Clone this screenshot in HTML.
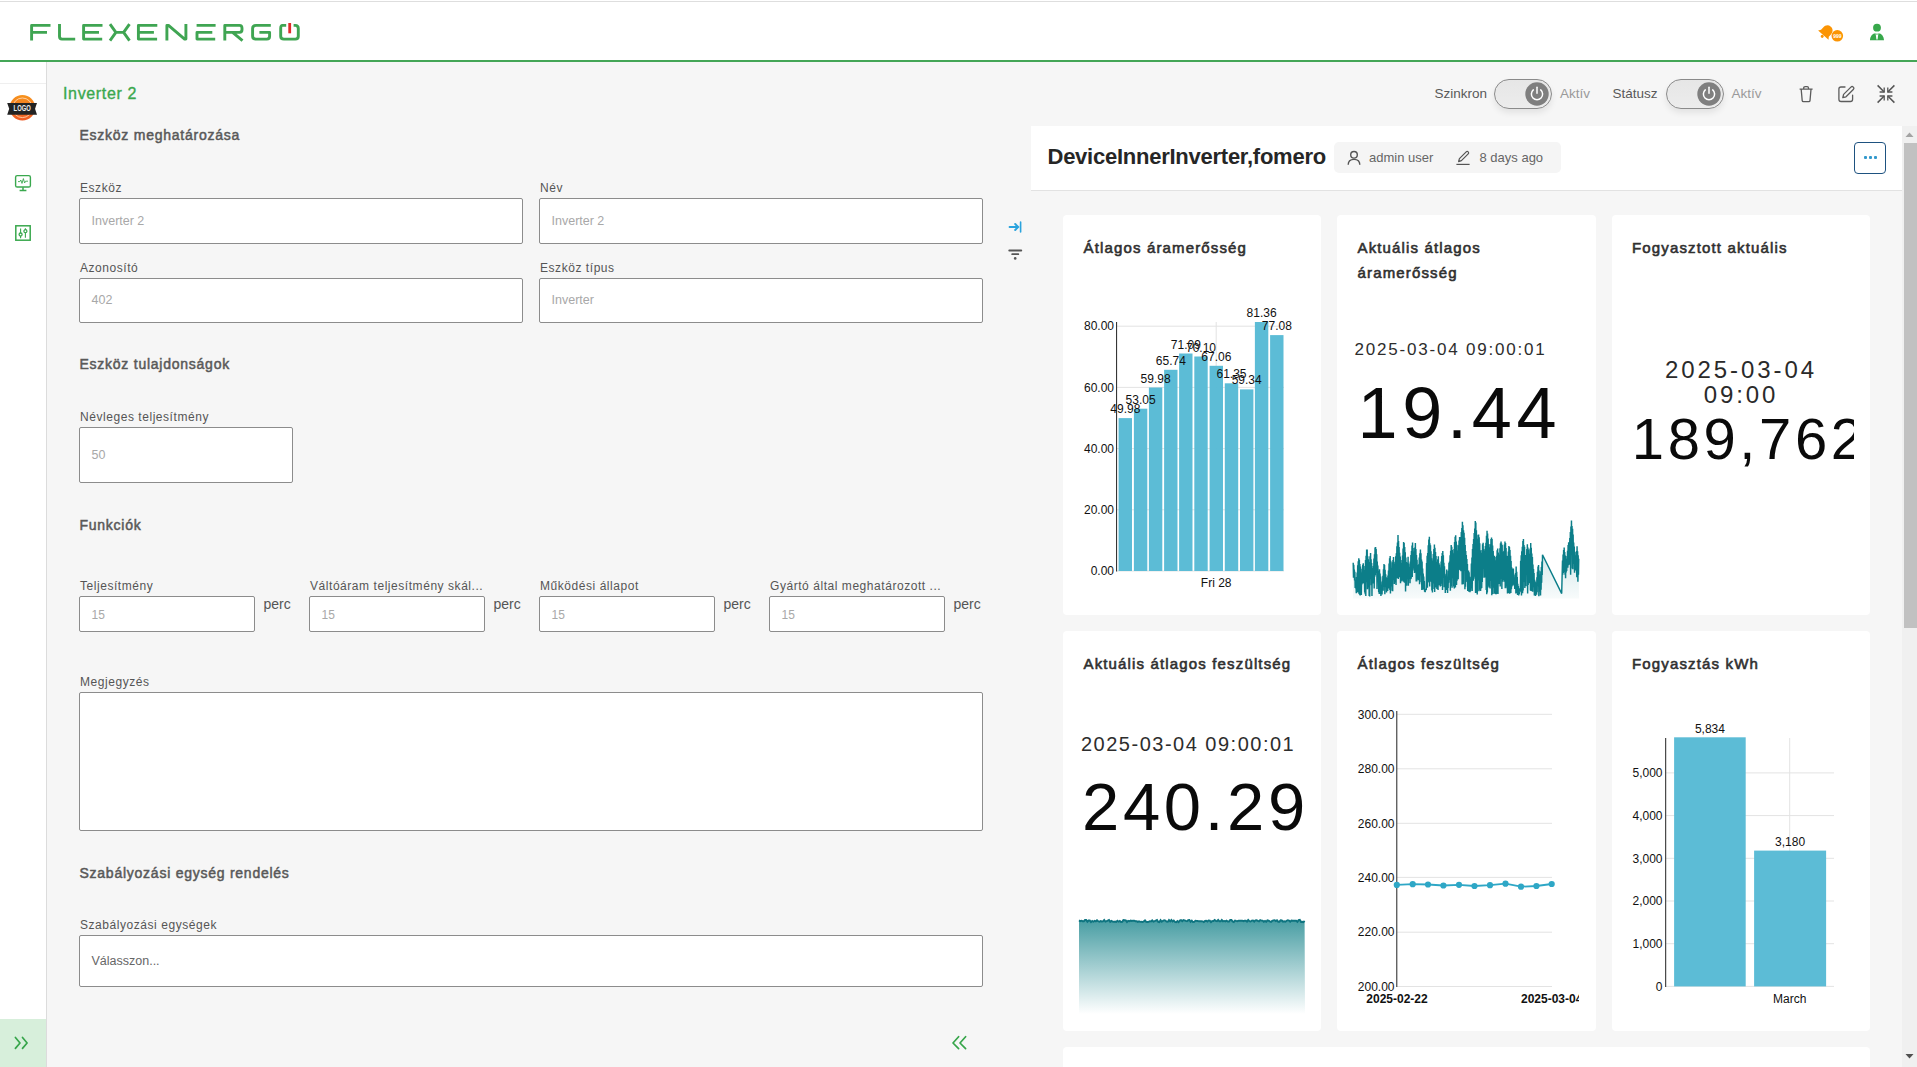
<!DOCTYPE html>
<html><head><meta charset="utf-8">
<style>
*{box-sizing:border-box;margin:0;padding:0}
html,body{width:1917px;height:1067px;overflow:hidden;background:#f6f6f6;font-family:"Liberation Sans",sans-serif;color:#333}
.abs{position:absolute}
.t{position:absolute;line-height:1;white-space:nowrap}
.tog{position:absolute;width:58px;height:30px;border:1px solid #8a8a8a;border-radius:15px;background:linear-gradient(#e6e6e6,#ececec);box-shadow:0 4px 6px rgba(0,0,0,0.08)}
#hdr{position:absolute;left:0;top:0;width:1917px;height:62px;background:#fff;border-top:2px solid #fff}
#hdr:before{content:"";position:absolute;left:0;top:-1px;width:100%;height:1px;background:#dedede}
#hdr:after{content:"";position:absolute;left:0;top:58px;width:100%;height:2px;background:#44a657}
#side{position:absolute;left:0;top:62px;width:47px;height:1005px;background:#fff;border-right:1px solid #dcdcdc}
.lbl{position:absolute;font-size:12px;color:#555;white-space:nowrap}
.inp{position:absolute;background:#fff;border:1.5px solid #8c8c8c;border-radius:2px}
.inp span{position:absolute;left:11px;font-size:12.5px;color:#a3a3a3;white-space:nowrap}
.sec{position:absolute;font-size:14.5px;font-weight:bold;color:#595959;white-space:nowrap}
.card{position:absolute;background:#fff;border-radius:4px;width:258px;height:400px}
.ctitle{position:absolute;left:20px;top:22px;font-size:15px;font-weight:bold;color:#2c2c2c;line-height:25px;white-space:nowrap}
.ax{font-family:"Liberation Sans",sans-serif;font-size:12px;fill:#111}
</style></head>
<body>
<!-- HEADER -->
<div id="hdr"></div>
<svg class="abs" style="left:0;top:0" width="320" height="60" viewBox="0 0 320 60">
<g fill="none" stroke="#3fa552" stroke-width="2.9" stroke-linejoin="round">
<!-- F -->
<path d="M50.5 25.4H31.6V40.6 M31.6 32.4H47"/>
<!-- L -->
<path d="M59.5 24V36.5Q59.5 39.1 62 39.1H75.2"/>
<!-- E -->
<path d="M102.5 25.4H83.6V39.1H102.2 M83.6 32.4H99"/>
<!-- X -->
<path d="M110 24.2L115.9 32.4L110 40.6 M115.9 32.4H123.6 M129.5 24.2L123.6 32.4L129.5 40.6"/>
<!-- E -->
<path d="M157.3 25.4H138.4V39.1H157.1 M138.4 32.4H153.9"/>
<!-- N -->
<path d="M166.9 40.6V25.4H168.5L184.6 39.1H185.9V24"/>
<!-- E -->
<path d="M215.6 25.4H196.6 M212.3 32.4H197V39.1H215.2"/>
<!-- R -->
<path d="M224.8 40.6V25.4H239.5Q242 25.4 242 28.3V29.8Q242 32.4 239.5 32.4H224.8 M232.6 32.4L242.5 40.6"/>
<!-- G -->
<path d="M270.8 25.4H256Q252.6 25.4 252.6 28.5V36.2Q252.6 39.1 256 39.1H266.8Q269.6 39.1 269.6 36.2V32.4H259.4"/>
<!-- O -->
<path d="M286.2 25.4H282.4Q280.7 25.4 280.7 28.5V36.2Q280.7 39.1 283.9 39.1H295.3Q298.3 39.1 298.3 36.2V28.5Q298.3 25.4 295.3 25.4H293.6"/>
</g>
<rect x="288.3" y="23" width="2.8" height="10.3" fill="#e02a2a"/>
</svg>
<!-- bell -->
<svg class="abs" style="left:1812px;top:20px" width="34" height="26" viewBox="0 0 34 26">
<g transform="translate(1.5 1.5) rotate(42 13 12) scale(0.9)" fill="#fb9403">
<path d="M13 4.5c-3.6 0-5.8 2.7-5.8 6.3v3.6l-2 2.6h15.6l-2-2.6v-3.6c0-3.6-2.2-6.3-5.8-6.3z"/>
<circle cx="13" cy="18.8" r="1.7"/>
</g>
<circle cx="25.3" cy="15.8" r="5.8" fill="#fb9403"/>
<text x="25.3" y="17.6" font-size="5" font-weight="bold" fill="#fff" text-anchor="middle" font-family="Liberation Sans">999</text>
</svg>
<!-- user -->
<svg class="abs" style="left:1866px;top:20px" width="22" height="24" viewBox="0 0 22 24">
<circle cx="11" cy="7.7" r="3.9" fill="#37a84b"/>
<path d="M4 20.2C4 16.5 6.6 13.2 9.6 13.2L10.4 19.5H11.6L12.4 13.2C15.4 13.2 18 16.5 18 20.2Z" fill="#37a84b"/>
<path d="M10.4 13.4h1.2l-0.2 1.6h-0.8z" fill="#37a84b"/>
</svg>

<!-- SIDEBAR -->
<div id="side"></div>
<div class="abs" style="left:0;top:83px;width:46px;height:1px;background:#efefef"></div>
<svg class="abs" style="left:6px;top:92px" width="32" height="32" viewBox="0 0 32 32">
<defs><linearGradient id="lg" x1="0" y1="0" x2="0" y2="1"><stop offset="0" stop-color="#f7941d"/><stop offset="1" stop-color="#ee5a24"/></linearGradient></defs>
<circle cx="16.4" cy="15.8" r="12.8" fill="url(#lg)"/>
<circle cx="16.4" cy="15.8" r="9.8" fill="none" stroke="#ffe0c0" stroke-width="0.8"/>
<path d="M1.2 10.9H31L29 16.8L31 22.7H1.2L3.2 16.8Z" fill="#232323"/>
<text x="7.6" y="19.2" font-size="8.2" font-weight="bold" fill="#f0f0f0" textLength="17.2" lengthAdjust="spacingAndGlyphs" font-family="Liberation Sans">LOGO</text>
</svg>
<svg class="abs" style="left:13px;top:173px" width="20" height="20" viewBox="0 0 20 20" fill="none" stroke="#3aa84e">
<rect x="2.6" y="2.6" width="14.8" height="11.4" rx="1.6" stroke-width="1.4"/>
<path d="M10 14.2V17.5M6.6 17.6H13.4" stroke-width="1.5"/>
<path d="M5 8.6H6.8L7.8 7L9 10.4L10.4 5.6L11.6 10L12.6 8.2H15" stroke-width="0.9"/>
</svg>
<svg class="abs" style="left:13px;top:223px" width="20" height="20" viewBox="0 0 20 20" fill="none" stroke="#3aa84e">
<rect x="2.8" y="2.8" width="14.4" height="14.4" stroke-width="1.5"/>
<path d="M7.6 5.5V15.2 M12.4 5.2V14.8" stroke-width="1.1"/>
<circle cx="7.6" cy="11.5" r="1.5" fill="#fff" stroke-width="1.3"/>
<circle cx="12.4" cy="8.2" r="1.5" fill="#fff" stroke-width="1.3"/>
</svg>
<div class="abs" style="left:0;top:1019px;width:46px;height:48px;background:#d7efdb"></div>
<svg class="abs" style="left:12px;top:1034px" width="20" height="18" viewBox="0 0 20 18" fill="none" stroke="#36a54a" stroke-width="1.7" stroke-linecap="round" stroke-linejoin="round">
<path d="M3.4 3.5L8 9L3.4 14.4 M10.5 3.5L15.1 9L10.5 14.4"/>
</svg>
<svg class="abs" style="left:948px;top:1033px" width="22" height="18" viewBox="0 0 22 18" fill="none" stroke="#36a54a" stroke-width="1.7" stroke-linecap="round" stroke-linejoin="round">
<path d="M10.6 3.7L5 10L10.6 15.6 M17.6 3.7L12 10L17.6 15.6"/>
</svg>
<div class="t" style="left:63px;top:85.5px;font-size:16px;color:#3aa84e;letter-spacing:0.65px;-webkit-text-stroke:0.35px #3aa84e">Inverter 2</div>


<div class="t" style="left:79.5px;top:128.15px;font-size:14px;color:#595959;letter-spacing:0.75px;-webkit-text-stroke:0.5px #595959;">Eszköz meghatározása</div>
<div class="t" style="left:80px;top:181.84px;font-size:12px;color:#555;letter-spacing:0.55px;">Eszköz</div>
<div class="t" style="left:540px;top:181.84px;font-size:12px;color:#555;letter-spacing:0.55px;">Név</div>
<div class="inp" style="left:79px;top:198px;width:444px;height:46px"></div>
<div class="inp" style="left:539px;top:198px;width:444px;height:46px"></div>
<div class="t" style="left:91.5px;top:215.42px;font-size:12.5px;color:#a8a8a8;">Inverter 2</div>
<div class="t" style="left:551.5px;top:215.42px;font-size:12.5px;color:#a8a8a8;">Inverter 2</div>
<div class="t" style="left:80px;top:261.84px;font-size:12px;color:#555;letter-spacing:0.55px;">Azonosító</div>
<div class="t" style="left:540px;top:261.84px;font-size:12px;color:#555;letter-spacing:0.55px;">Eszköz típus</div>
<div class="inp" style="left:79px;top:278px;width:444px;height:45px"></div>
<div class="inp" style="left:539px;top:278px;width:444px;height:45px"></div>
<div class="t" style="left:91.5px;top:294.42px;font-size:12.5px;color:#a8a8a8;">402</div>
<div class="t" style="left:551.5px;top:294.42px;font-size:12.5px;color:#a8a8a8;">Inverter</div>
<div class="t" style="left:79.5px;top:357.15px;font-size:14px;color:#595959;letter-spacing:0.75px;-webkit-text-stroke:0.5px #595959;">Eszköz tulajdonságok</div>
<div class="t" style="left:80px;top:410.84px;font-size:12px;color:#555;letter-spacing:0.55px;">Névleges teljesítmény</div>
<div class="inp" style="left:79px;top:427px;width:214px;height:56px"></div>
<div class="t" style="left:91.5px;top:449.42px;font-size:12.5px;color:#a8a8a8;">50</div>
<div class="t" style="left:79.5px;top:517.65px;font-size:14px;color:#595959;letter-spacing:0.75px;-webkit-text-stroke:0.5px #595959;">Funkciók</div>
<div class="t" style="left:80px;top:579.84px;font-size:12px;color:#555;letter-spacing:0.55px;">Teljesítmény</div>
<div class="inp" style="left:79px;top:596px;width:176px;height:36px"></div>
<div class="t" style="left:91.5px;top:608.84px;font-size:12px;color:#a8a8a8;">15</div>
<div class="t" style="left:263.5px;top:597.45px;font-size:14px;color:#555;">perc</div>
<div class="t" style="left:310px;top:579.84px;font-size:12px;color:#555;letter-spacing:0.55px;">Váltóáram teljesítmény skál...</div>
<div class="inp" style="left:309px;top:596px;width:176px;height:36px"></div>
<div class="t" style="left:321.5px;top:608.84px;font-size:12px;color:#a8a8a8;">15</div>
<div class="t" style="left:493.5px;top:597.45px;font-size:14px;color:#555;">perc</div>
<div class="t" style="left:540px;top:579.84px;font-size:12px;color:#555;letter-spacing:0.55px;">Működési állapot</div>
<div class="inp" style="left:539px;top:596px;width:176px;height:36px"></div>
<div class="t" style="left:551.5px;top:608.84px;font-size:12px;color:#a8a8a8;">15</div>
<div class="t" style="left:723.5px;top:597.45px;font-size:14px;color:#555;">perc</div>
<div class="t" style="left:770px;top:579.84px;font-size:12px;color:#555;letter-spacing:0.55px;">Gyártó által meghatározott ...</div>
<div class="inp" style="left:769px;top:596px;width:176px;height:36px"></div>
<div class="t" style="left:781.5px;top:608.84px;font-size:12px;color:#a8a8a8;">15</div>
<div class="t" style="left:953.5px;top:597.45px;font-size:14px;color:#555;">perc</div>
<div class="t" style="left:80px;top:675.84px;font-size:12px;color:#555;letter-spacing:0.55px;">Megjegyzés</div>
<div class="inp" style="left:79px;top:692px;width:904px;height:139px"></div>
<div class="t" style="left:79.5px;top:866.15px;font-size:14px;color:#595959;letter-spacing:0.75px;-webkit-text-stroke:0.5px #595959;">Szabályozási egység rendelés</div>
<div class="t" style="left:80px;top:919.34px;font-size:12px;color:#555;letter-spacing:0.55px;">Szabályozási egységek</div>
<div class="inp" style="left:79px;top:935px;width:904px;height:52px"></div>
<div class="t" style="left:91.5px;top:955.42px;font-size:12.5px;color:#666;">Válasszon...</div>
<svg class="abs" style="left:1006px;top:219px" width="18" height="16" viewBox="0 0 18 16" fill="none" stroke="#2aa3dd" stroke-linecap="round">
<path d="M3.6 8H12 M9.2 5L12.2 8L9.2 11" stroke-width="2"/><path d="M14.6 3V13" stroke-width="1.6"/></svg>
<svg class="abs" style="left:1006px;top:246px" width="18" height="18" viewBox="0 0 18 18" fill="#555">
<rect x="2.3" y="3.4" width="13.9" height="2" rx="1"/><rect x="5.3" y="7.3" width="7.9" height="1.8" rx="0.9"/><circle cx="9.2" cy="12.4" r="1.3"/></svg>
<div class="t" style="left:1434.5px;top:86.57px;font-size:13.5px;color:#595959;">Szinkron</div>
<div class="t" style="left:1560px;top:86.57px;font-size:13.5px;color:#9a9a9a;">Aktív</div>
<div class="t" style="left:1612.5px;top:86.57px;font-size:13.5px;color:#595959;">Státusz</div>
<div class="t" style="left:1731.5px;top:86.57px;font-size:13.5px;color:#9a9a9a;">Aktív</div>
<div class="tog" style="left:1494px;top:79px"></div>
<svg class="abs" style="left:1525px;top:82px" width="24" height="24" viewBox="0 0 24 24">
<circle cx="12" cy="12" r="11.7" fill="#7f7f7f"/>
<path d="M8.3 7.9A5.6 5.6 0 1 0 15.7 7.9" fill="none" stroke="#fff" stroke-width="1.5" stroke-linecap="round"/>
<path d="M12 5.2V11.2" stroke="#fff" stroke-width="1.5" stroke-linecap="round"/></svg>
<div class="tog" style="left:1666px;top:79px"></div>
<svg class="abs" style="left:1697px;top:82px" width="24" height="24" viewBox="0 0 24 24">
<circle cx="12" cy="12" r="11.7" fill="#7f7f7f"/>
<path d="M8.3 7.9A5.6 5.6 0 1 0 15.7 7.9" fill="none" stroke="#fff" stroke-width="1.5" stroke-linecap="round"/>
<path d="M12 5.2V11.2" stroke="#fff" stroke-width="1.5" stroke-linecap="round"/></svg>
<svg class="abs" style="left:1796px;top:84px" width="20" height="20" viewBox="0 0 20 20" fill="none" stroke="#5c5c5c" stroke-width="1.3" stroke-linejoin="round">
<path d="M3.6 5.2H16.6 M5.2 5.4L6.2 16.6Q6.3 17.6 7.4 17.6H12.8Q13.9 17.6 14 16.6L15 5.4 M7.7 5V3.9Q7.7 2.6 9.1 2.6H11.1Q12.5 2.6 12.5 3.9V5"/></svg>
<svg class="abs" style="left:1836px;top:84px" width="20" height="20" viewBox="0 0 20 20" fill="none" stroke="#5c5c5c" stroke-width="1.3" stroke-linecap="round" stroke-linejoin="round">
<path d="M9 3H5Q2.9 3 2.9 5.1V15.3Q2.9 17.5 5.1 17.5H14.4Q16.6 17.5 16.6 15.3V11.2"/>
<path d="M6.8 13.6L7.6 10.4L14.9 3.1Q16.1 1.9 17.3 3.1Q18.5 4.3 17.3 5.5L10 12.8Z"/></svg>
<svg class="abs" style="left:1876px;top:84px" width="20" height="20" viewBox="0 0 20 20" fill="none" stroke="#555" stroke-width="1.5">
<path d="M1.6 1.4L8.2 8 M18.4 1.4L11.8 8 M1.6 18.6L8.2 12 M18.4 18.6L11.8 12"/>
<path d="M8.2 3.6V8H3.6 M11.8 3.6V8H16.4 M8.2 16.4V12H3.6 M11.8 16.4V12H16.4" stroke-width="1.3"/></svg>
<!--RIGHT--><div class="abs" style="left:1031px;top:126px;width:871px;height:65px;background:#fff;border-bottom:1px solid #e2e2e2"></div>
<div class="t" style="left:1047.5px;top:146.38px;font-size:22px;font-weight:bold;color:#262626;letter-spacing:-0.25px;">DeviceInnerInverter,fomero</div>
<div class="abs" style="left:1334px;top:142px;width:227px;height:31px;background:#f5f5f5;border-radius:5px"></div>
<svg class="abs" style="left:1345px;top:149px" width="18" height="18" viewBox="0 0 18 18" fill="none" stroke="#555" stroke-width="1.4">
<circle cx="9" cy="5.8" r="3.3"/><path d="M3.2 15.8Q3.2 10.4 9 10.4Q14.8 10.4 14.8 15.8"/></svg>
<svg class="abs" style="left:1454px;top:149px" width="18" height="18" viewBox="0 0 18 18" fill="none" stroke="#555" stroke-width="1.2" stroke-linejoin="round">
<path d="M4.6 12.6L5.4 9.6L12.2 2.8Q13.2 1.8 14.2 2.8Q15.2 3.8 14.2 4.8L7.4 11.6Z"/><path d="M2.4 15.4H15.6"/></svg>
<div class="t" style="left:1369px;top:150.50px;font-size:13px;color:#666;">admin user</div>
<div class="t" style="left:1479.5px;top:150.50px;font-size:13px;color:#666;">8 days ago</div>
<div class="abs" style="left:1854px;top:142px;width:32px;height:32px;border:1.5px solid #1e5280;border-radius:4px"></div>
<div class="abs" style="left:1864.3px;top:156.3px;width:2.6px;height:2.6px;border-radius:1px;background:#3399cc"></div>
<div class="abs" style="left:1869.2px;top:156.3px;width:2.6px;height:2.6px;border-radius:1px;background:#3399cc"></div>
<div class="abs" style="left:1874.1px;top:156.3px;width:2.6px;height:2.6px;border-radius:1px;background:#3399cc"></div>
<div class="abs" style="left:1902px;top:126px;width:15px;height:941px;background:#f0f0f0"></div>
<div class="abs" style="left:1904px;top:143px;width:13px;height:485px;background:#c1c1c1"></div>
<svg class="abs" style="left:1902px;top:126px" width="15" height="17"><path d="M3.5 11H11.5L7.5 6.6Z" fill="#a3a3a3"/></svg>
<svg class="abs" style="left:1902px;top:1050px" width="15" height="17"><path d="M3.5 4H11.5L7.5 8.5Z" fill="#505050"/></svg>
<div class="card" style="left:1063px;top:215px;width:258px;height:400px"></div>
<div class="card" style="left:1337px;top:215px;width:259px;height:400px"></div>
<div class="card" style="left:1612px;top:215px;width:258px;height:400px"></div>
<div class="card" style="left:1063px;top:631px;width:258px;height:400px"></div>
<div class="card" style="left:1337px;top:631px;width:259px;height:400px"></div>
<div class="card" style="left:1612px;top:631px;width:258px;height:400px"></div>
<div class="card" style="left:1063px;top:1047px;width:807px;height:40px"></div>
<div class="t" style="left:1083.5px;top:240.30px;font-size:15px;color:#303030;font-size:15px;letter-spacing:1.15px;-webkit-text-stroke:0.6px #303030;">Átlagos áramerősség</div>
<div class="t" style="left:1357.5px;top:240.30px;font-size:15px;color:#303030;font-size:15px;letter-spacing:1.15px;-webkit-text-stroke:0.6px #303030;">Aktuális átlagos</div>
<div class="t" style="left:1357.5px;top:265.30px;font-size:15px;color:#303030;font-size:15px;letter-spacing:1.15px;-webkit-text-stroke:0.6px #303030;">áramerősség</div>
<div class="t" style="left:1632px;top:240.30px;font-size:15px;color:#303030;font-size:15px;letter-spacing:1.15px;-webkit-text-stroke:0.6px #303030;">Fogyasztott aktuális</div>
<div class="t" style="left:1083.5px;top:656.30px;font-size:15px;color:#303030;font-size:15px;letter-spacing:1.15px;-webkit-text-stroke:0.6px #303030;">Aktuális átlagos feszültség</div>
<div class="t" style="left:1357.5px;top:656.30px;font-size:15px;color:#303030;font-size:15px;letter-spacing:1.15px;-webkit-text-stroke:0.6px #303030;">Átlagos feszültség</div>
<div class="t" style="left:1632px;top:656.30px;font-size:15px;color:#303030;font-size:15px;letter-spacing:1.15px;-webkit-text-stroke:0.6px #303030;">Fogyasztás kWh</div>
<svg class="abs" style="left:0;top:0;overflow:visible" width="1" height="1"><line x1="1117" x2="1284" y1="571.0" y2="571.0" stroke="#e3e3e3" stroke-width="1"/><text class="ax" x="1114" y="575.2" text-anchor="end">0.00</text><line x1="1117" x2="1284" y1="509.8" y2="509.8" stroke="#e3e3e3" stroke-width="1"/><text class="ax" x="1114" y="514.0" text-anchor="end">20.00</text><line x1="1117" x2="1284" y1="448.6" y2="448.6" stroke="#e3e3e3" stroke-width="1"/><text class="ax" x="1114" y="452.8" text-anchor="end">40.00</text><line x1="1117" x2="1284" y1="387.4" y2="387.4" stroke="#e3e3e3" stroke-width="1"/><text class="ax" x="1114" y="391.6" text-anchor="end">60.00</text><line x1="1117" x2="1284" y1="326.2" y2="326.2" stroke="#e3e3e3" stroke-width="1"/><text class="ax" x="1114" y="330.4" text-anchor="end">80.00</text><line x1="1216.2" x2="1216.2" y1="322" y2="571" stroke="#e3e3e3"/><rect x="1118.6" y="418.1" width="13.4" height="152.9" fill="#57bad5" fill-opacity="0.97"/><rect x="1133.9" y="408.7" width="13.4" height="162.3" fill="#57bad5" fill-opacity="0.97"/><rect x="1148.9" y="387.5" width="13.4" height="183.5" fill="#57bad5" fill-opacity="0.97"/><rect x="1164.1" y="369.8" width="13.4" height="201.2" fill="#57bad5" fill-opacity="0.97"/><rect x="1179.1" y="353.5" width="13.4" height="217.5" fill="#57bad5" fill-opacity="0.97"/><rect x="1194.3" y="356.5" width="13.4" height="214.5" fill="#57bad5" fill-opacity="0.97"/><rect x="1209.6" y="365.8" width="13.4" height="205.2" fill="#57bad5" fill-opacity="0.97"/><rect x="1224.8" y="383.3" width="13.4" height="187.7" fill="#57bad5" fill-opacity="0.97"/><rect x="1240.0" y="389.4" width="13.4" height="181.6" fill="#57bad5" fill-opacity="0.97"/><rect x="1254.9" y="322.0" width="13.4" height="249.0" fill="#57bad5" fill-opacity="0.97"/><rect x="1270.1" y="335.1" width="13.4" height="235.9" fill="#57bad5" fill-opacity="0.97"/><text class="ax" x="1125.3" y="413.1" text-anchor="middle">49.98</text><text class="ax" x="1140.6" y="403.7" text-anchor="middle">53.05</text><text class="ax" x="1155.6" y="382.5" text-anchor="middle">59.98</text><text class="ax" x="1170.8" y="364.8" text-anchor="middle">65.74</text><text class="ax" x="1185.8" y="348.5" text-anchor="middle">71.09</text><text class="ax" x="1201.0" y="351.5" text-anchor="middle">70.10</text><text class="ax" x="1216.3" y="360.8" text-anchor="middle">67.06</text><text class="ax" x="1231.5" y="378.3" text-anchor="middle">61.35</text><text class="ax" x="1246.7" y="384.4" text-anchor="middle">59.34</text><text class="ax" x="1261.6" y="317.0" text-anchor="middle">81.36</text><text class="ax" x="1276.8" y="330.1" text-anchor="middle">77.08</text><line x1="1116.6" x2="1116.6" y1="322" y2="571.5" stroke="#222" stroke-width="1"/><text class="ax" x="1216.2" y="587" text-anchor="middle">Fri 28</text></svg>
<div class="t" style="left:1354.5px;top:340.61px;font-size:17px;color:#2d2d2d;letter-spacing:1.8px;">2025-03-04 09:00:01</div>
<div class="t" style="left:1357.5px;top:376.85px;font-size:72px;color:#0a0a0a;letter-spacing:4.7px;">19.44</div>
<svg class="abs" style="left:0;top:0;overflow:visible" width="1" height="1">
<defs><linearGradient id="g2" x1="0" y1="0" x2="0" y2="1"><stop offset="0" stop-color="#0e7f89" stop-opacity="0.28"/><stop offset="1" stop-color="#0e7f89" stop-opacity="0.03"/></linearGradient></defs>
<path d="M1353.20 562.7 L1353.48 577.8 L1353.76 564.8 L1354.04 577.3 L1354.32 569.6 L1354.60 580.5 L1354.88 571.8 L1355.16 588.1 L1355.44 580.5 L1355.72 588.4 L1356.00 583.9 L1356.28 593.2 L1356.56 577.1 L1356.84 592.0 L1357.12 572.4 L1357.40 586.9 L1357.68 565.2 L1357.96 592.4 L1358.24 561.3 L1358.52 577.2 L1358.80 558.2 L1359.08 594.0 L1359.36 559.7 L1359.64 594.8 L1359.92 564.0 L1360.20 595.4 L1360.48 566.6 L1360.76 584.0 L1361.04 572.5 L1361.32 594.9 L1361.60 576.5 L1361.88 584.4 L1362.16 568.7 L1362.44 580.4 L1362.72 564.7 L1363.00 583.5 L1363.28 563.3 L1363.56 580.7 L1363.84 570.3 L1364.12 582.9 L1364.40 573.2 L1364.68 592.4 L1364.96 566.0 L1365.24 594.2 L1365.52 560.1 L1365.80 595.9 L1366.08 555.7 L1366.36 582.3 L1366.64 549.5 L1366.92 578.5 L1367.20 549.4 L1367.48 589.3 L1367.76 556.3 L1368.04 586.2 L1368.32 559.3 L1368.60 587.5 L1368.88 565.9 L1369.16 596.0 L1369.44 562.1 L1369.72 596.6 L1370.00 556.2 L1370.28 575.5 L1370.56 552.9 L1370.84 579.0 L1371.12 559.3 L1371.40 585.3 L1371.68 563.0 L1371.96 596.1 L1372.24 568.7 L1372.52 582.7 L1372.80 568.1 L1373.08 583.5 L1373.36 566.0 L1373.64 577.6 L1373.92 558.6 L1374.20 588.6 L1374.48 554.3 L1374.76 576.7 L1375.04 547.6 L1375.32 575.3 L1375.60 547.1 L1375.88 572.9 L1376.16 549.1 L1376.44 573.1 L1376.72 554.3 L1377.00 589.1 L1377.28 561.5 L1377.56 578.9 L1377.84 565.4 L1378.12 581.3 L1378.40 571.3 L1378.68 592.2 L1378.96 575.2 L1379.24 594.0 L1379.52 569.2 L1379.80 594.1 L1380.08 573.5 L1380.36 583.7 L1380.64 576.4 L1380.92 595.9 L1381.20 584.7 L1381.48 592.6 L1381.76 585.7 L1382.04 594.5 L1382.32 581.4 L1382.60 587.4 L1382.88 575.8 L1383.16 590.7 L1383.44 569.2 L1383.72 581.4 L1384.00 564.0 L1384.28 587.0 L1384.56 565.1 L1384.84 594.3 L1385.12 569.7 L1385.40 582.3 L1385.68 574.3 L1385.96 587.0 L1386.24 577.3 L1386.52 592.5 L1386.80 582.5 L1387.08 588.5 L1387.36 577.7 L1387.64 591.0 L1387.92 575.5 L1388.20 583.7 L1388.48 570.4 L1388.76 588.5 L1389.04 563.4 L1389.32 581.6 L1389.60 558.3 L1389.88 589.9 L1390.16 555.9 L1390.44 593.6 L1390.72 560.8 L1391.00 577.8 L1391.28 568.2 L1391.56 586.5 L1391.84 568.8 L1392.12 590.8 L1392.40 562.2 L1392.68 591.2 L1392.96 559.9 L1393.24 576.5 L1393.52 557.1 L1393.80 580.2 L1394.08 563.8 L1394.36 584.1 L1394.64 568.4 L1394.92 582.6 L1395.20 561.7 L1395.48 581.7 L1395.76 556.3 L1396.04 585.1 L1396.32 553.2 L1396.60 578.2 L1396.88 546.3 L1397.16 568.7 L1397.44 542.6 L1397.72 578.0 L1398.00 535.0 L1398.28 579.1 L1398.56 541.0 L1398.84 576.9 L1399.12 546.9 L1399.40 574.9 L1399.68 552.7 L1399.96 577.6 L1400.24 556.6 L1400.52 583.2 L1400.80 563.2 L1401.08 581.5 L1401.36 563.0 L1401.64 579.5 L1401.92 560.0 L1402.20 580.8 L1402.48 555.4 L1402.76 571.8 L1403.04 548.5 L1403.32 581.7 L1403.60 542.1 L1403.88 570.4 L1404.16 543.0 L1404.44 582.7 L1404.72 547.0 L1405.00 577.3 L1405.28 552.2 L1405.56 591.6 L1405.84 557.5 L1406.12 582.3 L1406.40 562.1 L1406.68 585.7 L1406.96 566.9 L1407.24 579.2 L1407.52 562.9 L1407.80 577.1 L1408.08 556.8 L1408.36 585.7 L1408.64 563.5 L1408.92 578.7 L1409.20 567.7 L1409.48 578.5 L1409.76 567.3 L1410.04 583.3 L1410.32 561.6 L1410.60 579.2 L1410.88 554.9 L1411.16 578.7 L1411.44 550.9 L1411.72 576.1 L1412.00 545.4 L1412.28 577.1 L1412.56 542.5 L1412.84 570.4 L1413.12 548.1 L1413.40 568.6 L1413.68 551.7 L1413.96 566.3 L1414.24 551.5 L1414.52 573.1 L1414.80 547.6 L1415.08 572.5 L1415.36 543.0 L1415.64 564.8 L1415.92 549.1 L1416.20 581.6 L1416.48 555.1 L1416.76 581.6 L1417.04 559.8 L1417.32 579.4 L1417.60 565.0 L1417.88 574.4 L1418.16 569.2 L1418.44 580.3 L1418.72 564.2 L1419.00 576.3 L1419.28 557.4 L1419.56 584.3 L1419.84 553.2 L1420.12 575.5 L1420.40 549.6 L1420.68 567.1 L1420.96 553.3 L1421.24 582.3 L1421.52 559.5 L1421.80 590.0 L1422.08 561.4 L1422.36 582.2 L1422.64 568.4 L1422.92 589.7 L1423.20 573.5 L1423.48 583.1 L1423.76 576.4 L1424.04 589.3 L1424.32 580.9 L1424.60 591.7 L1424.88 588.9 L1425.16 592.2 L1425.44 589.9 L1425.72 590.3 L1426.00 588.9 L1426.28 590.0 L1426.56 563.1 L1426.84 584.6 L1427.12 555.8 L1427.40 587.8 L1427.68 553.0 L1427.96 582.6 L1428.24 545.2 L1428.52 581.7 L1428.80 539.5 L1429.08 575.6 L1429.36 536.8 L1429.64 586.5 L1429.92 543.2 L1430.20 571.6 L1430.48 545.2 L1430.76 581.7 L1431.04 551.3 L1431.32 573.6 L1431.60 558.3 L1431.88 590.6 L1432.16 561.3 L1432.44 592.6 L1432.72 560.6 L1433.00 589.0 L1433.28 554.0 L1433.56 583.5 L1433.84 549.1 L1434.12 578.5 L1434.40 544.5 L1434.68 592.1 L1434.96 547.8 L1435.24 587.6 L1435.52 551.9 L1435.80 587.5 L1436.08 556.0 L1436.36 584.4 L1436.64 561.7 L1436.92 588.9 L1437.20 567.1 L1437.48 584.4 L1437.76 559.2 L1438.04 590.0 L1438.32 556.2 L1438.60 576.0 L1438.88 563.0 L1439.16 585.3 L1439.44 564.5 L1439.72 583.2 L1440.00 571.2 L1440.28 586.4 L1440.56 567.5 L1440.84 583.7 L1441.12 561.5 L1441.40 576.1 L1441.68 556.1 L1441.96 585.9 L1442.24 552.9 L1442.52 590.0 L1442.80 551.1 L1443.08 575.6 L1443.36 555.2 L1443.64 577.8 L1443.92 562.8 L1444.20 587.3 L1444.48 566.2 L1444.76 583.2 L1445.04 573.7 L1445.32 593.1 L1445.60 577.0 L1445.88 588.9 L1446.16 575.6 L1446.44 590.0 L1446.72 569.5 L1447.00 586.6 L1447.28 577.2 L1447.56 592.9 L1447.84 579.9 L1448.12 587.9 L1448.40 570.8 L1448.68 582.8 L1448.96 562.7 L1449.24 579.7 L1449.52 561.4 L1449.80 571.8 L1450.08 555.3 L1450.36 590.8 L1450.64 550.8 L1450.92 586.0 L1451.20 545.0 L1451.48 565.1 L1451.76 546.7 L1452.04 587.7 L1452.32 550.0 L1452.60 570.9 L1452.88 554.5 L1453.16 578.2 L1453.44 553.3 L1453.72 586.4 L1454.00 549.1 L1454.28 588.6 L1454.56 542.0 L1454.84 578.9 L1455.12 536.8 L1455.40 587.4 L1455.68 535.2 L1455.96 567.0 L1456.24 541.5 L1456.52 584.9 L1456.80 544.7 L1457.08 580.8 L1457.36 550.4 L1457.64 577.8 L1457.92 553.8 L1458.20 579.3 L1458.48 545.2 L1458.76 570.0 L1459.04 540.5 L1459.32 569.7 L1459.60 536.9 L1459.88 560.2 L1460.16 538.6 L1460.44 570.5 L1460.72 537.1 L1461.00 571.3 L1461.28 532.0 L1461.56 563.7 L1461.84 528.0 L1462.12 584.4 L1462.40 521.8 L1462.68 575.7 L1462.96 525.3 L1463.24 584.2 L1463.52 530.2 L1463.80 569.3 L1464.08 532.8 L1464.36 571.1 L1464.64 537.8 L1464.92 589.3 L1465.20 544.9 L1465.48 586.8 L1465.76 551.0 L1466.04 582.1 L1466.32 555.1 L1466.60 577.1 L1466.88 558.9 L1467.16 580.6 L1467.44 564.1 L1467.72 591.1 L1468.00 578.3 L1468.28 585.4 L1468.56 570.4 L1468.84 591.8 L1469.12 572.3 L1469.40 585.3 L1469.68 576.7 L1469.96 592.3 L1470.24 581.0 L1470.52 591.3 L1470.80 584.4 L1471.08 588.3 L1471.36 563.5 L1471.64 587.2 L1471.92 557.6 L1472.20 591.0 L1472.48 549.1 L1472.76 576.0 L1473.04 544.0 L1473.32 580.8 L1473.60 539.1 L1473.88 576.8 L1474.16 533.0 L1474.44 573.4 L1474.72 528.6 L1475.00 578.8 L1475.28 521.0 L1475.56 592.9 L1475.84 522.5 L1476.12 592.8 L1476.40 530.3 L1476.68 577.1 L1476.96 534.8 L1477.24 594.4 L1477.52 538.7 L1477.80 567.5 L1478.08 540.3 L1478.36 580.5 L1478.64 534.6 L1478.92 591.2 L1479.20 537.3 L1479.48 589.7 L1479.76 543.2 L1480.04 583.9 L1480.32 550.3 L1480.60 590.9 L1480.88 552.8 L1481.16 588.6 L1481.44 554.8 L1481.72 587.9 L1482.00 550.0 L1482.28 582.0 L1482.56 544.2 L1482.84 567.7 L1483.12 542.7 L1483.40 568.5 L1483.68 549.0 L1483.96 577.8 L1484.24 553.1 L1484.52 572.9 L1484.80 550.5 L1485.08 577.5 L1485.36 546.1 L1485.64 575.5 L1485.92 542.8 L1486.20 589.9 L1486.48 535.7 L1486.76 594.3 L1487.04 530.8 L1487.32 592.4 L1487.60 533.6 L1487.88 562.7 L1488.16 538.5 L1488.44 585.7 L1488.72 544.0 L1489.00 587.4 L1489.28 550.0 L1489.56 577.1 L1489.84 547.3 L1490.12 588.6 L1490.40 544.3 L1490.68 566.3 L1490.96 539.1 L1491.24 580.8 L1491.52 537.6 L1491.80 595.2 L1492.08 539.0 L1492.36 572.2 L1492.64 545.4 L1492.92 594.1 L1493.20 551.0 L1493.48 571.4 L1493.76 555.9 L1494.04 587.8 L1494.32 555.7 L1494.60 593.7 L1494.88 557.1 L1495.16 584.7 L1495.44 562.3 L1495.72 594.3 L1496.00 560.3 L1496.28 594.2 L1496.56 555.8 L1496.84 593.8 L1497.12 550.2 L1497.40 584.4 L1497.68 548.6 L1497.96 594.0 L1498.24 552.6 L1498.52 573.7 L1498.80 558.2 L1499.08 584.1 L1499.36 554.6 L1499.64 582.1 L1499.92 548.3 L1500.20 586.6 L1500.48 543.3 L1500.76 578.9 L1501.04 541.5 L1501.32 576.2 L1501.60 543.4 L1501.88 589.0 L1502.16 545.1 L1502.44 581.0 L1502.72 552.0 L1503.00 581.8 L1503.28 554.8 L1503.56 579.9 L1503.84 551.1 L1504.12 570.3 L1504.40 544.4 L1504.68 581.7 L1504.96 541.5 L1505.24 588.3 L1505.52 542.9 L1505.80 586.5 L1506.08 547.9 L1506.36 576.0 L1506.64 555.8 L1506.92 588.2 L1507.20 558.1 L1507.48 593.4 L1507.76 555.9 L1508.04 593.1 L1508.32 551.6 L1508.60 579.9 L1508.88 545.9 L1509.16 593.3 L1509.44 547.0 L1509.72 593.8 L1510.00 550.0 L1510.28 588.2 L1510.56 555.7 L1510.84 592.9 L1511.12 561.0 L1511.40 589.3 L1511.68 567.3 L1511.96 586.4 L1512.24 572.9 L1512.52 585.3 L1512.80 568.4 L1513.08 585.4 L1513.36 568.6 L1513.64 583.6 L1513.92 574.5 L1514.20 584.3 L1514.48 579.8 L1514.76 589.0 L1515.04 577.5 L1515.32 585.8 L1515.60 572.9 L1515.88 593.5 L1516.16 566.6 L1516.44 592.9 L1516.72 571.7 L1517.00 587.2 L1517.28 576.9 L1517.56 595.0 L1517.84 583.8 L1518.12 591.8 L1518.40 585.9 L1518.68 595.4 L1518.96 588.2 L1519.24 594.2 L1519.52 591.2 L1519.80 591.6 L1520.08 590.3 L1520.36 591.5 L1520.64 560.7 L1520.92 588.0 L1521.20 555.2 L1521.48 595.6 L1521.76 551.2 L1522.04 573.4 L1522.32 546.7 L1522.60 593.2 L1522.88 540.9 L1523.16 590.5 L1523.44 539.1 L1523.72 582.1 L1524.00 545.1 L1524.28 573.3 L1524.56 546.8 L1524.84 588.0 L1525.12 555.0 L1525.40 585.6 L1525.68 558.2 L1525.96 586.2 L1526.24 555.0 L1526.52 572.2 L1526.80 549.0 L1527.08 568.7 L1527.36 544.2 L1527.64 593.4 L1527.92 547.6 L1528.20 585.1 L1528.48 549.6 L1528.76 572.6 L1529.04 554.6 L1529.32 583.3 L1529.60 553.8 L1529.88 573.8 L1530.16 548.4 L1530.44 590.6 L1530.72 542.9 L1531.00 590.9 L1531.28 547.7 L1531.56 587.3 L1531.84 553.5 L1532.12 591.2 L1532.40 556.9 L1532.68 591.7 L1532.96 564.5 L1533.24 581.4 L1533.52 569.0 L1533.80 587.3 L1534.08 572.9 L1534.36 595.4 L1534.64 579.7 L1534.92 592.3 L1535.20 581.6 L1535.48 595.9 L1535.76 584.5 L1536.04 590.9 L1536.32 582.6 L1536.60 594.7 L1536.88 577.2 L1537.16 592.2 L1537.44 571.7 L1537.72 582.3 L1538.00 566.4 L1538.28 581.0 L1538.56 565.0 L1538.84 596.2 L1539.12 570.6 L1539.40 588.1 L1539.68 574.4 L1539.96 591.8 L1540.24 576.3 L1540.52 595.6 L1540.80 571.2 L1541.08 589.8 L1541.36 566.9 L1541.64 582.8 L1541.92 561.5 L1542.20 574.9 L1542.48 558.1 L1542.50 554.7 L1561.70 593.6 L1562.50 560.6 L1562.78 574.7 L1563.06 554.5 L1563.34 573.0 L1563.62 550.0 L1563.90 571.9 L1564.18 547.4 L1564.46 566.8 L1564.74 552.1 L1565.02 574.7 L1565.30 555.4 L1565.58 578.2 L1565.86 558.7 L1566.14 572.5 L1566.42 562.8 L1566.70 571.1 L1566.98 555.9 L1567.26 566.1 L1567.54 550.7 L1567.82 567.7 L1568.10 544.9 L1568.38 565.2 L1568.66 542.2 L1568.94 560.6 L1569.22 543.2 L1569.50 564.8 L1569.78 537.9 L1570.06 561.3 L1570.34 532.0 L1570.62 574.8 L1570.90 526.6 L1571.18 551.8 L1571.46 520.4 L1571.74 548.7 L1572.02 526.0 L1572.30 568.4 L1572.58 528.8 L1572.86 569.3 L1573.14 534.6 L1573.42 563.9 L1573.70 542.5 L1573.98 560.2 L1574.26 546.4 L1574.54 572.7 L1574.82 552.1 L1575.10 570.6 L1575.38 555.3 L1575.66 570.5 L1575.94 556.7 L1576.22 567.9 L1576.50 551.1 L1576.78 577.2 L1577.06 546.2 L1577.34 570.7 L1577.62 551.3 L1577.90 581.7 L1578.18 555.3 L1578.46 574.7 L1578.74 558.7 L1579 598.5 L1353 598.5 Z" fill="url(#g2)"/>
<path d="M1353.20 562.7 L1353.48 577.8 L1353.76 564.8 L1354.04 577.3 L1354.32 569.6 L1354.60 580.5 L1354.88 571.8 L1355.16 588.1 L1355.44 580.5 L1355.72 588.4 L1356.00 583.9 L1356.28 593.2 L1356.56 577.1 L1356.84 592.0 L1357.12 572.4 L1357.40 586.9 L1357.68 565.2 L1357.96 592.4 L1358.24 561.3 L1358.52 577.2 L1358.80 558.2 L1359.08 594.0 L1359.36 559.7 L1359.64 594.8 L1359.92 564.0 L1360.20 595.4 L1360.48 566.6 L1360.76 584.0 L1361.04 572.5 L1361.32 594.9 L1361.60 576.5 L1361.88 584.4 L1362.16 568.7 L1362.44 580.4 L1362.72 564.7 L1363.00 583.5 L1363.28 563.3 L1363.56 580.7 L1363.84 570.3 L1364.12 582.9 L1364.40 573.2 L1364.68 592.4 L1364.96 566.0 L1365.24 594.2 L1365.52 560.1 L1365.80 595.9 L1366.08 555.7 L1366.36 582.3 L1366.64 549.5 L1366.92 578.5 L1367.20 549.4 L1367.48 589.3 L1367.76 556.3 L1368.04 586.2 L1368.32 559.3 L1368.60 587.5 L1368.88 565.9 L1369.16 596.0 L1369.44 562.1 L1369.72 596.6 L1370.00 556.2 L1370.28 575.5 L1370.56 552.9 L1370.84 579.0 L1371.12 559.3 L1371.40 585.3 L1371.68 563.0 L1371.96 596.1 L1372.24 568.7 L1372.52 582.7 L1372.80 568.1 L1373.08 583.5 L1373.36 566.0 L1373.64 577.6 L1373.92 558.6 L1374.20 588.6 L1374.48 554.3 L1374.76 576.7 L1375.04 547.6 L1375.32 575.3 L1375.60 547.1 L1375.88 572.9 L1376.16 549.1 L1376.44 573.1 L1376.72 554.3 L1377.00 589.1 L1377.28 561.5 L1377.56 578.9 L1377.84 565.4 L1378.12 581.3 L1378.40 571.3 L1378.68 592.2 L1378.96 575.2 L1379.24 594.0 L1379.52 569.2 L1379.80 594.1 L1380.08 573.5 L1380.36 583.7 L1380.64 576.4 L1380.92 595.9 L1381.20 584.7 L1381.48 592.6 L1381.76 585.7 L1382.04 594.5 L1382.32 581.4 L1382.60 587.4 L1382.88 575.8 L1383.16 590.7 L1383.44 569.2 L1383.72 581.4 L1384.00 564.0 L1384.28 587.0 L1384.56 565.1 L1384.84 594.3 L1385.12 569.7 L1385.40 582.3 L1385.68 574.3 L1385.96 587.0 L1386.24 577.3 L1386.52 592.5 L1386.80 582.5 L1387.08 588.5 L1387.36 577.7 L1387.64 591.0 L1387.92 575.5 L1388.20 583.7 L1388.48 570.4 L1388.76 588.5 L1389.04 563.4 L1389.32 581.6 L1389.60 558.3 L1389.88 589.9 L1390.16 555.9 L1390.44 593.6 L1390.72 560.8 L1391.00 577.8 L1391.28 568.2 L1391.56 586.5 L1391.84 568.8 L1392.12 590.8 L1392.40 562.2 L1392.68 591.2 L1392.96 559.9 L1393.24 576.5 L1393.52 557.1 L1393.80 580.2 L1394.08 563.8 L1394.36 584.1 L1394.64 568.4 L1394.92 582.6 L1395.20 561.7 L1395.48 581.7 L1395.76 556.3 L1396.04 585.1 L1396.32 553.2 L1396.60 578.2 L1396.88 546.3 L1397.16 568.7 L1397.44 542.6 L1397.72 578.0 L1398.00 535.0 L1398.28 579.1 L1398.56 541.0 L1398.84 576.9 L1399.12 546.9 L1399.40 574.9 L1399.68 552.7 L1399.96 577.6 L1400.24 556.6 L1400.52 583.2 L1400.80 563.2 L1401.08 581.5 L1401.36 563.0 L1401.64 579.5 L1401.92 560.0 L1402.20 580.8 L1402.48 555.4 L1402.76 571.8 L1403.04 548.5 L1403.32 581.7 L1403.60 542.1 L1403.88 570.4 L1404.16 543.0 L1404.44 582.7 L1404.72 547.0 L1405.00 577.3 L1405.28 552.2 L1405.56 591.6 L1405.84 557.5 L1406.12 582.3 L1406.40 562.1 L1406.68 585.7 L1406.96 566.9 L1407.24 579.2 L1407.52 562.9 L1407.80 577.1 L1408.08 556.8 L1408.36 585.7 L1408.64 563.5 L1408.92 578.7 L1409.20 567.7 L1409.48 578.5 L1409.76 567.3 L1410.04 583.3 L1410.32 561.6 L1410.60 579.2 L1410.88 554.9 L1411.16 578.7 L1411.44 550.9 L1411.72 576.1 L1412.00 545.4 L1412.28 577.1 L1412.56 542.5 L1412.84 570.4 L1413.12 548.1 L1413.40 568.6 L1413.68 551.7 L1413.96 566.3 L1414.24 551.5 L1414.52 573.1 L1414.80 547.6 L1415.08 572.5 L1415.36 543.0 L1415.64 564.8 L1415.92 549.1 L1416.20 581.6 L1416.48 555.1 L1416.76 581.6 L1417.04 559.8 L1417.32 579.4 L1417.60 565.0 L1417.88 574.4 L1418.16 569.2 L1418.44 580.3 L1418.72 564.2 L1419.00 576.3 L1419.28 557.4 L1419.56 584.3 L1419.84 553.2 L1420.12 575.5 L1420.40 549.6 L1420.68 567.1 L1420.96 553.3 L1421.24 582.3 L1421.52 559.5 L1421.80 590.0 L1422.08 561.4 L1422.36 582.2 L1422.64 568.4 L1422.92 589.7 L1423.20 573.5 L1423.48 583.1 L1423.76 576.4 L1424.04 589.3 L1424.32 580.9 L1424.60 591.7 L1424.88 588.9 L1425.16 592.2 L1425.44 589.9 L1425.72 590.3 L1426.00 588.9 L1426.28 590.0 L1426.56 563.1 L1426.84 584.6 L1427.12 555.8 L1427.40 587.8 L1427.68 553.0 L1427.96 582.6 L1428.24 545.2 L1428.52 581.7 L1428.80 539.5 L1429.08 575.6 L1429.36 536.8 L1429.64 586.5 L1429.92 543.2 L1430.20 571.6 L1430.48 545.2 L1430.76 581.7 L1431.04 551.3 L1431.32 573.6 L1431.60 558.3 L1431.88 590.6 L1432.16 561.3 L1432.44 592.6 L1432.72 560.6 L1433.00 589.0 L1433.28 554.0 L1433.56 583.5 L1433.84 549.1 L1434.12 578.5 L1434.40 544.5 L1434.68 592.1 L1434.96 547.8 L1435.24 587.6 L1435.52 551.9 L1435.80 587.5 L1436.08 556.0 L1436.36 584.4 L1436.64 561.7 L1436.92 588.9 L1437.20 567.1 L1437.48 584.4 L1437.76 559.2 L1438.04 590.0 L1438.32 556.2 L1438.60 576.0 L1438.88 563.0 L1439.16 585.3 L1439.44 564.5 L1439.72 583.2 L1440.00 571.2 L1440.28 586.4 L1440.56 567.5 L1440.84 583.7 L1441.12 561.5 L1441.40 576.1 L1441.68 556.1 L1441.96 585.9 L1442.24 552.9 L1442.52 590.0 L1442.80 551.1 L1443.08 575.6 L1443.36 555.2 L1443.64 577.8 L1443.92 562.8 L1444.20 587.3 L1444.48 566.2 L1444.76 583.2 L1445.04 573.7 L1445.32 593.1 L1445.60 577.0 L1445.88 588.9 L1446.16 575.6 L1446.44 590.0 L1446.72 569.5 L1447.00 586.6 L1447.28 577.2 L1447.56 592.9 L1447.84 579.9 L1448.12 587.9 L1448.40 570.8 L1448.68 582.8 L1448.96 562.7 L1449.24 579.7 L1449.52 561.4 L1449.80 571.8 L1450.08 555.3 L1450.36 590.8 L1450.64 550.8 L1450.92 586.0 L1451.20 545.0 L1451.48 565.1 L1451.76 546.7 L1452.04 587.7 L1452.32 550.0 L1452.60 570.9 L1452.88 554.5 L1453.16 578.2 L1453.44 553.3 L1453.72 586.4 L1454.00 549.1 L1454.28 588.6 L1454.56 542.0 L1454.84 578.9 L1455.12 536.8 L1455.40 587.4 L1455.68 535.2 L1455.96 567.0 L1456.24 541.5 L1456.52 584.9 L1456.80 544.7 L1457.08 580.8 L1457.36 550.4 L1457.64 577.8 L1457.92 553.8 L1458.20 579.3 L1458.48 545.2 L1458.76 570.0 L1459.04 540.5 L1459.32 569.7 L1459.60 536.9 L1459.88 560.2 L1460.16 538.6 L1460.44 570.5 L1460.72 537.1 L1461.00 571.3 L1461.28 532.0 L1461.56 563.7 L1461.84 528.0 L1462.12 584.4 L1462.40 521.8 L1462.68 575.7 L1462.96 525.3 L1463.24 584.2 L1463.52 530.2 L1463.80 569.3 L1464.08 532.8 L1464.36 571.1 L1464.64 537.8 L1464.92 589.3 L1465.20 544.9 L1465.48 586.8 L1465.76 551.0 L1466.04 582.1 L1466.32 555.1 L1466.60 577.1 L1466.88 558.9 L1467.16 580.6 L1467.44 564.1 L1467.72 591.1 L1468.00 578.3 L1468.28 585.4 L1468.56 570.4 L1468.84 591.8 L1469.12 572.3 L1469.40 585.3 L1469.68 576.7 L1469.96 592.3 L1470.24 581.0 L1470.52 591.3 L1470.80 584.4 L1471.08 588.3 L1471.36 563.5 L1471.64 587.2 L1471.92 557.6 L1472.20 591.0 L1472.48 549.1 L1472.76 576.0 L1473.04 544.0 L1473.32 580.8 L1473.60 539.1 L1473.88 576.8 L1474.16 533.0 L1474.44 573.4 L1474.72 528.6 L1475.00 578.8 L1475.28 521.0 L1475.56 592.9 L1475.84 522.5 L1476.12 592.8 L1476.40 530.3 L1476.68 577.1 L1476.96 534.8 L1477.24 594.4 L1477.52 538.7 L1477.80 567.5 L1478.08 540.3 L1478.36 580.5 L1478.64 534.6 L1478.92 591.2 L1479.20 537.3 L1479.48 589.7 L1479.76 543.2 L1480.04 583.9 L1480.32 550.3 L1480.60 590.9 L1480.88 552.8 L1481.16 588.6 L1481.44 554.8 L1481.72 587.9 L1482.00 550.0 L1482.28 582.0 L1482.56 544.2 L1482.84 567.7 L1483.12 542.7 L1483.40 568.5 L1483.68 549.0 L1483.96 577.8 L1484.24 553.1 L1484.52 572.9 L1484.80 550.5 L1485.08 577.5 L1485.36 546.1 L1485.64 575.5 L1485.92 542.8 L1486.20 589.9 L1486.48 535.7 L1486.76 594.3 L1487.04 530.8 L1487.32 592.4 L1487.60 533.6 L1487.88 562.7 L1488.16 538.5 L1488.44 585.7 L1488.72 544.0 L1489.00 587.4 L1489.28 550.0 L1489.56 577.1 L1489.84 547.3 L1490.12 588.6 L1490.40 544.3 L1490.68 566.3 L1490.96 539.1 L1491.24 580.8 L1491.52 537.6 L1491.80 595.2 L1492.08 539.0 L1492.36 572.2 L1492.64 545.4 L1492.92 594.1 L1493.20 551.0 L1493.48 571.4 L1493.76 555.9 L1494.04 587.8 L1494.32 555.7 L1494.60 593.7 L1494.88 557.1 L1495.16 584.7 L1495.44 562.3 L1495.72 594.3 L1496.00 560.3 L1496.28 594.2 L1496.56 555.8 L1496.84 593.8 L1497.12 550.2 L1497.40 584.4 L1497.68 548.6 L1497.96 594.0 L1498.24 552.6 L1498.52 573.7 L1498.80 558.2 L1499.08 584.1 L1499.36 554.6 L1499.64 582.1 L1499.92 548.3 L1500.20 586.6 L1500.48 543.3 L1500.76 578.9 L1501.04 541.5 L1501.32 576.2 L1501.60 543.4 L1501.88 589.0 L1502.16 545.1 L1502.44 581.0 L1502.72 552.0 L1503.00 581.8 L1503.28 554.8 L1503.56 579.9 L1503.84 551.1 L1504.12 570.3 L1504.40 544.4 L1504.68 581.7 L1504.96 541.5 L1505.24 588.3 L1505.52 542.9 L1505.80 586.5 L1506.08 547.9 L1506.36 576.0 L1506.64 555.8 L1506.92 588.2 L1507.20 558.1 L1507.48 593.4 L1507.76 555.9 L1508.04 593.1 L1508.32 551.6 L1508.60 579.9 L1508.88 545.9 L1509.16 593.3 L1509.44 547.0 L1509.72 593.8 L1510.00 550.0 L1510.28 588.2 L1510.56 555.7 L1510.84 592.9 L1511.12 561.0 L1511.40 589.3 L1511.68 567.3 L1511.96 586.4 L1512.24 572.9 L1512.52 585.3 L1512.80 568.4 L1513.08 585.4 L1513.36 568.6 L1513.64 583.6 L1513.92 574.5 L1514.20 584.3 L1514.48 579.8 L1514.76 589.0 L1515.04 577.5 L1515.32 585.8 L1515.60 572.9 L1515.88 593.5 L1516.16 566.6 L1516.44 592.9 L1516.72 571.7 L1517.00 587.2 L1517.28 576.9 L1517.56 595.0 L1517.84 583.8 L1518.12 591.8 L1518.40 585.9 L1518.68 595.4 L1518.96 588.2 L1519.24 594.2 L1519.52 591.2 L1519.80 591.6 L1520.08 590.3 L1520.36 591.5 L1520.64 560.7 L1520.92 588.0 L1521.20 555.2 L1521.48 595.6 L1521.76 551.2 L1522.04 573.4 L1522.32 546.7 L1522.60 593.2 L1522.88 540.9 L1523.16 590.5 L1523.44 539.1 L1523.72 582.1 L1524.00 545.1 L1524.28 573.3 L1524.56 546.8 L1524.84 588.0 L1525.12 555.0 L1525.40 585.6 L1525.68 558.2 L1525.96 586.2 L1526.24 555.0 L1526.52 572.2 L1526.80 549.0 L1527.08 568.7 L1527.36 544.2 L1527.64 593.4 L1527.92 547.6 L1528.20 585.1 L1528.48 549.6 L1528.76 572.6 L1529.04 554.6 L1529.32 583.3 L1529.60 553.8 L1529.88 573.8 L1530.16 548.4 L1530.44 590.6 L1530.72 542.9 L1531.00 590.9 L1531.28 547.7 L1531.56 587.3 L1531.84 553.5 L1532.12 591.2 L1532.40 556.9 L1532.68 591.7 L1532.96 564.5 L1533.24 581.4 L1533.52 569.0 L1533.80 587.3 L1534.08 572.9 L1534.36 595.4 L1534.64 579.7 L1534.92 592.3 L1535.20 581.6 L1535.48 595.9 L1535.76 584.5 L1536.04 590.9 L1536.32 582.6 L1536.60 594.7 L1536.88 577.2 L1537.16 592.2 L1537.44 571.7 L1537.72 582.3 L1538.00 566.4 L1538.28 581.0 L1538.56 565.0 L1538.84 596.2 L1539.12 570.6 L1539.40 588.1 L1539.68 574.4 L1539.96 591.8 L1540.24 576.3 L1540.52 595.6 L1540.80 571.2 L1541.08 589.8 L1541.36 566.9 L1541.64 582.8 L1541.92 561.5 L1542.20 574.9 L1542.48 558.1 L1542.50 554.7 L1561.70 593.6 L1562.50 560.6 L1562.78 574.7 L1563.06 554.5 L1563.34 573.0 L1563.62 550.0 L1563.90 571.9 L1564.18 547.4 L1564.46 566.8 L1564.74 552.1 L1565.02 574.7 L1565.30 555.4 L1565.58 578.2 L1565.86 558.7 L1566.14 572.5 L1566.42 562.8 L1566.70 571.1 L1566.98 555.9 L1567.26 566.1 L1567.54 550.7 L1567.82 567.7 L1568.10 544.9 L1568.38 565.2 L1568.66 542.2 L1568.94 560.6 L1569.22 543.2 L1569.50 564.8 L1569.78 537.9 L1570.06 561.3 L1570.34 532.0 L1570.62 574.8 L1570.90 526.6 L1571.18 551.8 L1571.46 520.4 L1571.74 548.7 L1572.02 526.0 L1572.30 568.4 L1572.58 528.8 L1572.86 569.3 L1573.14 534.6 L1573.42 563.9 L1573.70 542.5 L1573.98 560.2 L1574.26 546.4 L1574.54 572.7 L1574.82 552.1 L1575.10 570.6 L1575.38 555.3 L1575.66 570.5 L1575.94 556.7 L1576.22 567.9 L1576.50 551.1 L1576.78 577.2 L1577.06 546.2 L1577.34 570.7 L1577.62 551.3 L1577.90 581.7 L1578.18 555.3 L1578.46 574.7 L1578.74 558.7" fill="none" stroke="#0c7e89" stroke-width="1.45" stroke-linejoin="miter" stroke-miterlimit="2"/>
</svg>
<div class="t" style="left:1612px;top:358px;width:258px;text-align:center;font-size:24px;line-height:24.8px;color:#2a2a2a;letter-spacing:2.9px;white-space:normal">2025-03-04<br>09:00</div>
<div class="abs" style="left:1612px;top:400px;width:242px;height:80px;overflow:hidden"><div class="t" style="left:19.8px;top:9.80px;font-size:58px;color:#0a0a0a;letter-spacing:3.6px;">189,762</div>
</div>
<div class="t" style="left:1081px;top:734.07px;font-size:20px;color:#2d2d2d;letter-spacing:1.5px;">2025-03-04 09:00:01</div>
<div class="t" style="left:1082px;top:773.48px;font-size:67px;color:#0a0a0a;letter-spacing:3.66px;">240.29</div>
<svg class="abs" style="left:0;top:0;overflow:visible" width="1" height="1">
<defs><linearGradient id="g4" x1="0" y1="0" x2="0" y2="1"><stop offset="0" stop-color="#1a858c" stop-opacity="0.8"/><stop offset="1" stop-color="#1a858c" stop-opacity="0"/></linearGradient></defs>
<path d="M1079.0 920.4 L1080.2 921.1 L1081.4 920.7 L1082.6 921.2 L1083.8 921.3 L1085.0 920.0 L1086.2 919.9 L1087.4 921.7 L1088.6 920.5 L1089.8 920.4 L1091.0 922.1 L1092.2 920.9 L1093.4 921.7 L1094.6 920.9 L1095.8 921.3 L1097.0 920.2 L1098.2 921.3 L1099.4 921.8 L1100.6 921.1 L1101.8 921.5 L1103.0 921.4 L1104.2 920.0 L1105.4 921.6 L1106.6 921.2 L1107.8 920.6 L1109.0 920.0 L1110.2 921.8 L1111.4 920.9 L1112.6 921.5 L1113.8 921.8 L1115.0 921.5 L1116.2 921.9 L1117.4 920.8 L1118.6 921.7 L1119.8 920.9 L1121.0 922.0 L1122.2 921.8 L1123.4 920.1 L1124.6 920.2 L1125.8 920.4 L1127.0 922.0 L1128.2 920.9 L1129.4 921.3 L1130.6 920.6 L1131.8 921.0 L1133.0 920.7 L1134.2 920.7 L1135.4 921.2 L1136.6 921.2 L1137.8 921.9 L1139.0 921.4 L1140.2 921.9 L1141.4 921.8 L1142.6 922.1 L1143.8 921.4 L1145.0 920.3 L1146.2 921.8 L1147.4 922.0 L1148.6 921.9 L1149.8 921.2 L1151.0 921.5 L1152.2 920.4 L1153.4 921.7 L1154.6 921.2 L1155.8 920.5 L1157.0 920.0 L1158.2 921.8 L1159.4 922.1 L1160.6 920.1 L1161.8 921.7 L1163.0 920.8 L1164.2 920.2 L1165.4 920.5 L1166.6 921.6 L1167.8 921.8 L1169.0 920.0 L1170.2 921.3 L1171.4 920.0 L1172.6 921.5 L1173.8 920.6 L1175.0 921.8 L1176.2 922.1 L1177.4 921.0 L1178.6 922.1 L1179.8 920.6 L1181.0 920.1 L1182.2 921.2 L1183.4 920.0 L1184.6 920.3 L1185.8 920.8 L1187.0 921.2 L1188.2 920.2 L1189.4 920.0 L1190.6 921.8 L1191.8 920.6 L1193.0 922.0 L1194.2 921.9 L1195.4 920.7 L1196.6 920.9 L1197.8 921.0 L1199.0 921.3 L1200.2 921.2 L1201.4 921.1 L1202.6 921.3 L1203.8 922.0 L1205.0 921.0 L1206.2 920.8 L1207.4 921.5 L1208.6 920.4 L1209.8 920.6 L1211.0 922.1 L1212.2 921.0 L1213.4 921.1 L1214.6 919.9 L1215.8 920.8 L1217.0 921.2 L1218.2 919.9 L1219.4 921.3 L1220.6 921.3 L1221.8 920.0 L1223.0 921.3 L1224.2 920.9 L1225.4 921.4 L1226.6 920.7 L1227.8 921.5 L1229.0 921.5 L1230.2 919.9 L1231.4 920.0 L1232.6 921.4 L1233.8 922.0 L1235.0 920.5 L1236.2 920.9 L1237.4 921.2 L1238.6 920.6 L1239.8 920.7 L1241.0 920.6 L1242.2 920.7 L1243.4 921.2 L1244.6 920.6 L1245.8 920.7 L1247.0 921.6 L1248.2 920.0 L1249.4 921.2 L1250.6 921.5 L1251.8 920.6 L1253.0 920.4 L1254.2 921.7 L1255.4 920.4 L1256.6 920.3 L1257.8 920.9 L1259.0 921.4 L1260.2 920.1 L1261.4 920.6 L1262.6 920.6 L1263.8 921.7 L1265.0 920.9 L1266.2 921.8 L1267.4 920.3 L1268.6 920.6 L1269.8 921.3 L1271.0 921.8 L1272.2 920.9 L1273.4 920.4 L1274.6 920.2 L1275.8 921.1 L1277.0 920.3 L1278.2 921.7 L1279.4 921.7 L1280.6 920.3 L1281.8 920.5 L1283.0 921.7 L1284.2 921.3 L1285.4 921.7 L1286.6 920.7 L1287.8 920.2 L1289.0 920.5 L1290.2 921.6 L1291.4 920.5 L1292.6 920.7 L1293.8 920.8 L1295.0 920.8 L1296.2 920.8 L1297.4 921.9 L1298.6 920.2 L1299.8 919.9 L1301.0 922.0 L1302.2 921.8 L1303.4 922.1 L1304.6 920.9 L1305 1014 L1079 1014 Z" fill="url(#g4)"/>
<path d="M1079.0 920.4 L1080.2 921.1 L1081.4 920.7 L1082.6 921.2 L1083.8 921.3 L1085.0 920.0 L1086.2 919.9 L1087.4 921.7 L1088.6 920.5 L1089.8 920.4 L1091.0 922.1 L1092.2 920.9 L1093.4 921.7 L1094.6 920.9 L1095.8 921.3 L1097.0 920.2 L1098.2 921.3 L1099.4 921.8 L1100.6 921.1 L1101.8 921.5 L1103.0 921.4 L1104.2 920.0 L1105.4 921.6 L1106.6 921.2 L1107.8 920.6 L1109.0 920.0 L1110.2 921.8 L1111.4 920.9 L1112.6 921.5 L1113.8 921.8 L1115.0 921.5 L1116.2 921.9 L1117.4 920.8 L1118.6 921.7 L1119.8 920.9 L1121.0 922.0 L1122.2 921.8 L1123.4 920.1 L1124.6 920.2 L1125.8 920.4 L1127.0 922.0 L1128.2 920.9 L1129.4 921.3 L1130.6 920.6 L1131.8 921.0 L1133.0 920.7 L1134.2 920.7 L1135.4 921.2 L1136.6 921.2 L1137.8 921.9 L1139.0 921.4 L1140.2 921.9 L1141.4 921.8 L1142.6 922.1 L1143.8 921.4 L1145.0 920.3 L1146.2 921.8 L1147.4 922.0 L1148.6 921.9 L1149.8 921.2 L1151.0 921.5 L1152.2 920.4 L1153.4 921.7 L1154.6 921.2 L1155.8 920.5 L1157.0 920.0 L1158.2 921.8 L1159.4 922.1 L1160.6 920.1 L1161.8 921.7 L1163.0 920.8 L1164.2 920.2 L1165.4 920.5 L1166.6 921.6 L1167.8 921.8 L1169.0 920.0 L1170.2 921.3 L1171.4 920.0 L1172.6 921.5 L1173.8 920.6 L1175.0 921.8 L1176.2 922.1 L1177.4 921.0 L1178.6 922.1 L1179.8 920.6 L1181.0 920.1 L1182.2 921.2 L1183.4 920.0 L1184.6 920.3 L1185.8 920.8 L1187.0 921.2 L1188.2 920.2 L1189.4 920.0 L1190.6 921.8 L1191.8 920.6 L1193.0 922.0 L1194.2 921.9 L1195.4 920.7 L1196.6 920.9 L1197.8 921.0 L1199.0 921.3 L1200.2 921.2 L1201.4 921.1 L1202.6 921.3 L1203.8 922.0 L1205.0 921.0 L1206.2 920.8 L1207.4 921.5 L1208.6 920.4 L1209.8 920.6 L1211.0 922.1 L1212.2 921.0 L1213.4 921.1 L1214.6 919.9 L1215.8 920.8 L1217.0 921.2 L1218.2 919.9 L1219.4 921.3 L1220.6 921.3 L1221.8 920.0 L1223.0 921.3 L1224.2 920.9 L1225.4 921.4 L1226.6 920.7 L1227.8 921.5 L1229.0 921.5 L1230.2 919.9 L1231.4 920.0 L1232.6 921.4 L1233.8 922.0 L1235.0 920.5 L1236.2 920.9 L1237.4 921.2 L1238.6 920.6 L1239.8 920.7 L1241.0 920.6 L1242.2 920.7 L1243.4 921.2 L1244.6 920.6 L1245.8 920.7 L1247.0 921.6 L1248.2 920.0 L1249.4 921.2 L1250.6 921.5 L1251.8 920.6 L1253.0 920.4 L1254.2 921.7 L1255.4 920.4 L1256.6 920.3 L1257.8 920.9 L1259.0 921.4 L1260.2 920.1 L1261.4 920.6 L1262.6 920.6 L1263.8 921.7 L1265.0 920.9 L1266.2 921.8 L1267.4 920.3 L1268.6 920.6 L1269.8 921.3 L1271.0 921.8 L1272.2 920.9 L1273.4 920.4 L1274.6 920.2 L1275.8 921.1 L1277.0 920.3 L1278.2 921.7 L1279.4 921.7 L1280.6 920.3 L1281.8 920.5 L1283.0 921.7 L1284.2 921.3 L1285.4 921.7 L1286.6 920.7 L1287.8 920.2 L1289.0 920.5 L1290.2 921.6 L1291.4 920.5 L1292.6 920.7 L1293.8 920.8 L1295.0 920.8 L1296.2 920.8 L1297.4 921.9 L1298.6 920.2 L1299.8 919.9 L1301.0 922.0 L1302.2 921.8 L1303.4 922.1 L1304.6 920.9" fill="none" stroke="#0e7480" stroke-width="1.9"/>
</svg>
<svg class="abs" style="left:0;top:0;overflow:visible" width="1" height="1"><line x1="1397" x2="1552" y1="714.3" y2="714.3" stroke="#e3e3e3"/><text class="ax" x="1394.5" y="718.5" text-anchor="end">300.00</text><line x1="1397" x2="1552" y1="768.8" y2="768.8" stroke="#e3e3e3"/><text class="ax" x="1394.5" y="773.0" text-anchor="end">280.00</text><line x1="1397" x2="1552" y1="823.3" y2="823.3" stroke="#e3e3e3"/><text class="ax" x="1394.5" y="827.5" text-anchor="end">260.00</text><line x1="1397" x2="1552" y1="877.4" y2="877.4" stroke="#e3e3e3"/><text class="ax" x="1394.5" y="881.6" text-anchor="end">240.00</text><line x1="1397" x2="1552" y1="932.2" y2="932.2" stroke="#e3e3e3"/><text class="ax" x="1394.5" y="936.4" text-anchor="end">220.00</text><line x1="1397" x2="1552" y1="986.5" y2="986.5" stroke="#e3e3e3"/><text class="ax" x="1394.5" y="990.7" text-anchor="end">200.00</text><line x1="1396.8" x2="1396.8" y1="711" y2="987" stroke="#222"/><path d="M1396.8 884.9 L1412.7 884.2 L1428 884.5 L1443.4 885.5 L1459 884.8 L1474.5 886 L1490 885.2 L1505.5 883.7 L1521 886.7 L1536.4 886 L1551.7 884" fill="none" stroke="#2ea7c6" stroke-width="1.8"/><circle cx="1396.8" cy="884.9" r="3.1" fill="#2ea7c6"/><circle cx="1412.7" cy="884.2" r="3.1" fill="#2ea7c6"/><circle cx="1428" cy="884.5" r="3.1" fill="#2ea7c6"/><circle cx="1443.4" cy="885.5" r="3.1" fill="#2ea7c6"/><circle cx="1459" cy="884.8" r="3.1" fill="#2ea7c6"/><circle cx="1474.5" cy="886" r="3.1" fill="#2ea7c6"/><circle cx="1490" cy="885.2" r="3.1" fill="#2ea7c6"/><circle cx="1505.5" cy="883.7" r="3.1" fill="#2ea7c6"/><circle cx="1521" cy="886.7" r="3.1" fill="#2ea7c6"/><circle cx="1536.4" cy="886" r="3.1" fill="#2ea7c6"/><circle cx="1551.7" cy="884" r="3.1" fill="#2ea7c6"/><text class="ax" x="1397" y="1002.5" text-anchor="middle" font-weight="bold">2025-02-22</text></svg>
<div class="abs" style="left:1357px;top:985px;width:222px;height:25px;overflow:hidden"><svg width="222" height="25" style="overflow:hidden"><text class="ax" x="194.7" y="17.5" text-anchor="middle" font-weight="bold">2025-03-04</text></svg></div>
<svg class="abs" style="left:0;top:0;overflow:visible" width="1" height="1"><line x1="1666" x2="1834" y1="986.4" y2="986.4" stroke="#e3e3e3"/><text class="ax" x="1662.5" y="990.6" text-anchor="end">0</text><line x1="1666" x2="1834" y1="943.7" y2="943.7" stroke="#e3e3e3"/><text class="ax" x="1662.5" y="947.9" text-anchor="end">1,000</text><line x1="1666" x2="1834" y1="901.0" y2="901.0" stroke="#e3e3e3"/><text class="ax" x="1662.5" y="905.2" text-anchor="end">2,000</text><line x1="1666" x2="1834" y1="858.3" y2="858.3" stroke="#e3e3e3"/><text class="ax" x="1662.5" y="862.5" text-anchor="end">3,000</text><line x1="1666" x2="1834" y1="815.6" y2="815.6" stroke="#e3e3e3"/><text class="ax" x="1662.5" y="819.8" text-anchor="end">4,000</text><line x1="1666" x2="1834" y1="772.9" y2="772.9" stroke="#e3e3e3"/><text class="ax" x="1662.5" y="777.1" text-anchor="end">5,000</text><line x1="1789.7" x2="1789.7" y1="738" y2="986.4" stroke="#e3e3e3"/><rect x="1674.1" y="737.3" width="71.6" height="249.1" fill="#57bad5" fill-opacity="0.97"/><rect x="1754.1" y="850.6" width="72" height="135.8" fill="#57bad5" fill-opacity="0.97"/><text class="ax" x="1709.9" y="732.8" text-anchor="middle">5,834</text><text class="ax" x="1790.1" y="846.1" text-anchor="middle">3,180</text><line x1="1665.7" x2="1665.7" y1="738" y2="987" stroke="#222"/><text class="ax" x="1789.7" y="1003.2" text-anchor="middle">March</text></svg>
<!--/RIGHT-->
</body></html>
